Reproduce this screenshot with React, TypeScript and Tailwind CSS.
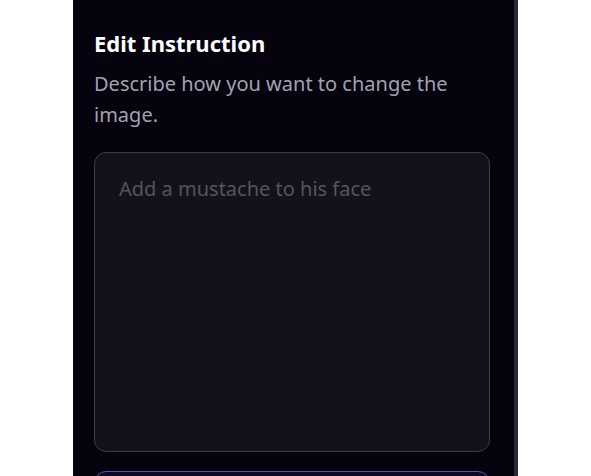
export default function App() {
  return (
    <div className="min-h-screen bg-white flex" style={{ fontFamily: '"Noto Sans", "Open Sans", sans-serif' }}>
      {/* sidebar panel */}
      <aside className="ml-[73px] w-[445px] h-[476px] overflow-hidden bg-[#05030d] border-r-4 border-[#2a2932] pl-[21px] pr-[24px] pt-[29px]">
        <h2 className="text-[22px] font-bold text-white leading-[28px]">Edit Instruction</h2>
        <p className="mt-[11px] text-[20px] leading-[31px] text-[#a3a1b0]">
          Describe how you want to change the image.
        </p>
        <textarea
          className="mt-[22px] w-[396px] h-[300px] resize-none rounded-xl bg-[#13121b] border border-[#3b3a45] px-6 py-[21px] text-[20px] text-white placeholder:text-[#55535f] outline-none"
          placeholder="Add a mustache to his face"
        />
        <button className="mt-[13px] w-[396px] h-[48px] rounded-xl border border-[#5b4bc8] bg-[#0d0a22]" />
      </aside>
    </div>
  );
}
